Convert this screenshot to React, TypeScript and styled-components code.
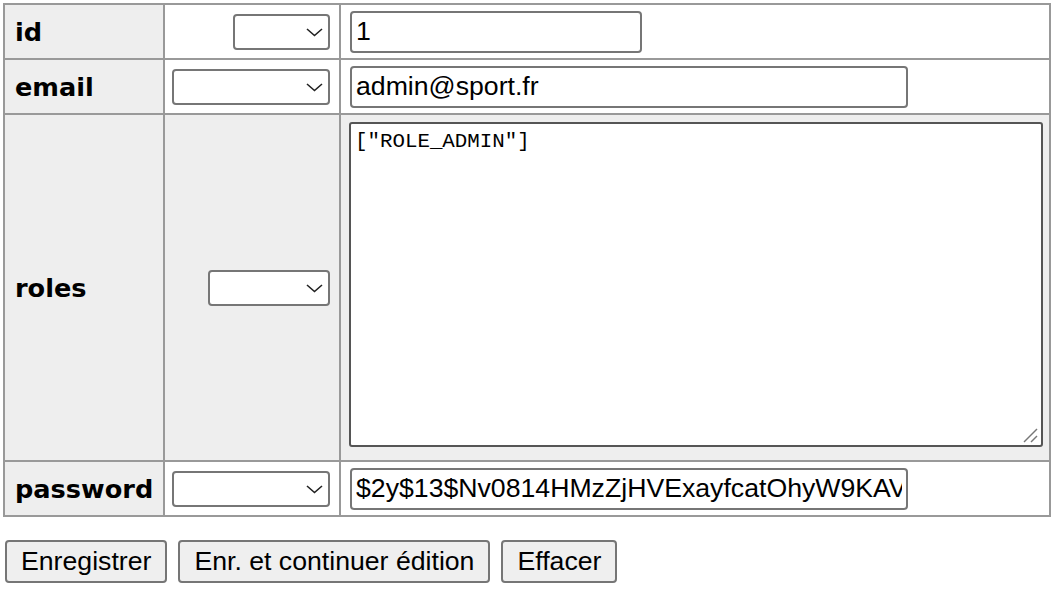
import React from "react";
import styled, { createGlobalStyle } from "styled-components";

const Global = createGlobalStyle`
  html, body { margin: 0; padding: 0; background: #fff; color: #000; }
  body { font-family: "DejaVu Sans", Verdana, sans-serif; }
`;

const Page = styled.div`
  padding: 3px 0 0 3px;
`;

const FormTable = styled.div`
  display: grid;
  grid-template-columns: 158px 174px 708px;
  grid-template-rows: 53px 53px 345px 53px;
  gap: 2px;
  padding: 2px;
  background: #999;
  width: max-content;
`;

const LabelCell = styled.div`
  background: #eee;
  display: flex;
  align-items: center;
  padding-left: 10px;
  font-family: "DejaVu Sans", Verdana, sans-serif;
  font-weight: bold;
  font-size: 25.6px;
`;

const FuncCell = styled.div<{ $shaded?: boolean }>`
  background: ${(p) => (p.$shaded ? "#eee" : "#fff")};
  display: flex;
  align-items: center;
  justify-content: flex-end;
  padding-right: 9px;
`;

const ValueCell = styled.div<{ $shaded?: boolean; $top?: boolean }>`
  background: ${(p) => (p.$shaded ? "#eee" : "#fff")};
  display: flex;
  align-items: ${(p) => (p.$top ? "flex-start" : "center")};
  padding: ${(p) => (p.$top ? "7px 0 0 8px" : "0 0 0 9px")};
`;

const SelectWrap = styled.div`
  position: relative;
  display: inline-flex;
`;

const FuncSelect = styled.select<{ $w: number }>`
  appearance: none;
  -webkit-appearance: none;
  box-sizing: border-box;
  width: ${(p) => p.$w}px;
  height: 36px;
  border: 2px solid #767676;
  border-radius: 4px;
  background: #fff;
  font-family: "Liberation Sans", Arial, sans-serif;
  font-size: 26px;
  padding: 0 4px;
  margin: 0;
`;

const Chevron = styled.svg`
  position: absolute;
  right: 7px;
  top: 50%;
  margin-top: -4px;
  width: 17px;
  height: 9px;
  pointer-events: none;
`;

const TextInput = styled.input<{ $w: number }>`
  box-sizing: border-box;
  width: ${(p) => p.$w}px;
  height: 42px;
  border: 2px solid #767676;
  border-radius: 4px;
  background: #fff;
  color: #000;
  font-family: "Liberation Sans", Arial, sans-serif;
  font-size: 26.67px;
  padding: 2px 4px;
  margin: 0;
  outline: none;
`;

const AreaWrap = styled.div`
  position: relative;
  display: block;
`;

const TextArea = styled.textarea`
  display: block;
  box-sizing: border-box;
  width: 694px;
  height: 325px;
  border: 2px solid #555;
  border-radius: 3px;
  background: #fff;
  color: #000;
  font-family: "Liberation Mono", "Courier New", monospace;
  font-size: 20.8px;
  padding: 6px 4px 4px;
  margin: 0;
  resize: none;
  outline: none;
`;

const Grip = styled.svg`
  position: absolute;
  right: 2px;
  bottom: 2px;
  width: 20px;
  height: 20px;
  pointer-events: none;
`;

const ButtonRow = styled.div`
  display: flex;
  gap: 11px;
  margin-top: 23px;
  margin-left: 2px;
`;

const Button = styled.button`
  box-sizing: border-box;
  height: 43px;
  padding: 0 14px;
  border: 2px solid #767676;
  border-radius: 4px;
  background: #efefef;
  color: #000;
  font-family: "Liberation Sans", Arial, sans-serif;
  font-size: 26.67px;
  margin: 0;
`;

const Select = ({ w }: { w: number }) => (
  <SelectWrap>
    <FuncSelect $w={w} defaultValue="">
      <option value=""></option>
    </FuncSelect>
    <Chevron viewBox="0 0 17 9">
      <polyline points="1,1 8.5,7.5 16,1" fill="none" stroke="#222" strokeWidth="1.6" />
    </Chevron>
  </SelectWrap>
);

export default function App() {
  return (
    <Page>
      <Global />
      <FormTable>
        <LabelCell>id</LabelCell>
        <FuncCell>
          <Select w={97} />
        </FuncCell>
        <ValueCell>
          <TextInput $w={292} defaultValue="1" />
        </ValueCell>

        <LabelCell>email</LabelCell>
        <FuncCell>
          <Select w={158} />
        </FuncCell>
        <ValueCell>
          <TextInput $w={558} defaultValue="admin@sport.fr" />
        </ValueCell>

        <LabelCell>roles</LabelCell>
        <FuncCell $shaded>
          <Select w={122} />
        </FuncCell>
        <ValueCell $shaded $top>
          <AreaWrap>
            <TextArea defaultValue={'["ROLE_ADMIN"]'} spellCheck={false} />
            <Grip viewBox="0 0 20 20">
              <line x1="3" y1="17" x2="16" y2="4" stroke="#777" strokeWidth="1.5" />
              <line x1="10" y1="17" x2="16" y2="11" stroke="#777" strokeWidth="1.5" />
            </Grip>
          </AreaWrap>
        </ValueCell>

        <LabelCell>password</LabelCell>
        <FuncCell>
          <Select w={158} />
        </FuncCell>
        <ValueCell>
          <TextInput
            $w={558}
            defaultValue="$2y$13$Nv0814HMzZjHVExayfcatOhyW9KAVqXbH1gEo3sLpZ.mRkT8uJwYi"
          />
        </ValueCell>
      </FormTable>
      <ButtonRow>
        <Button>Enregistrer</Button>
        <Button>Enr. et continuer édition</Button>
        <Button>Effacer</Button>
      </ButtonRow>
    </Page>
  );
}
